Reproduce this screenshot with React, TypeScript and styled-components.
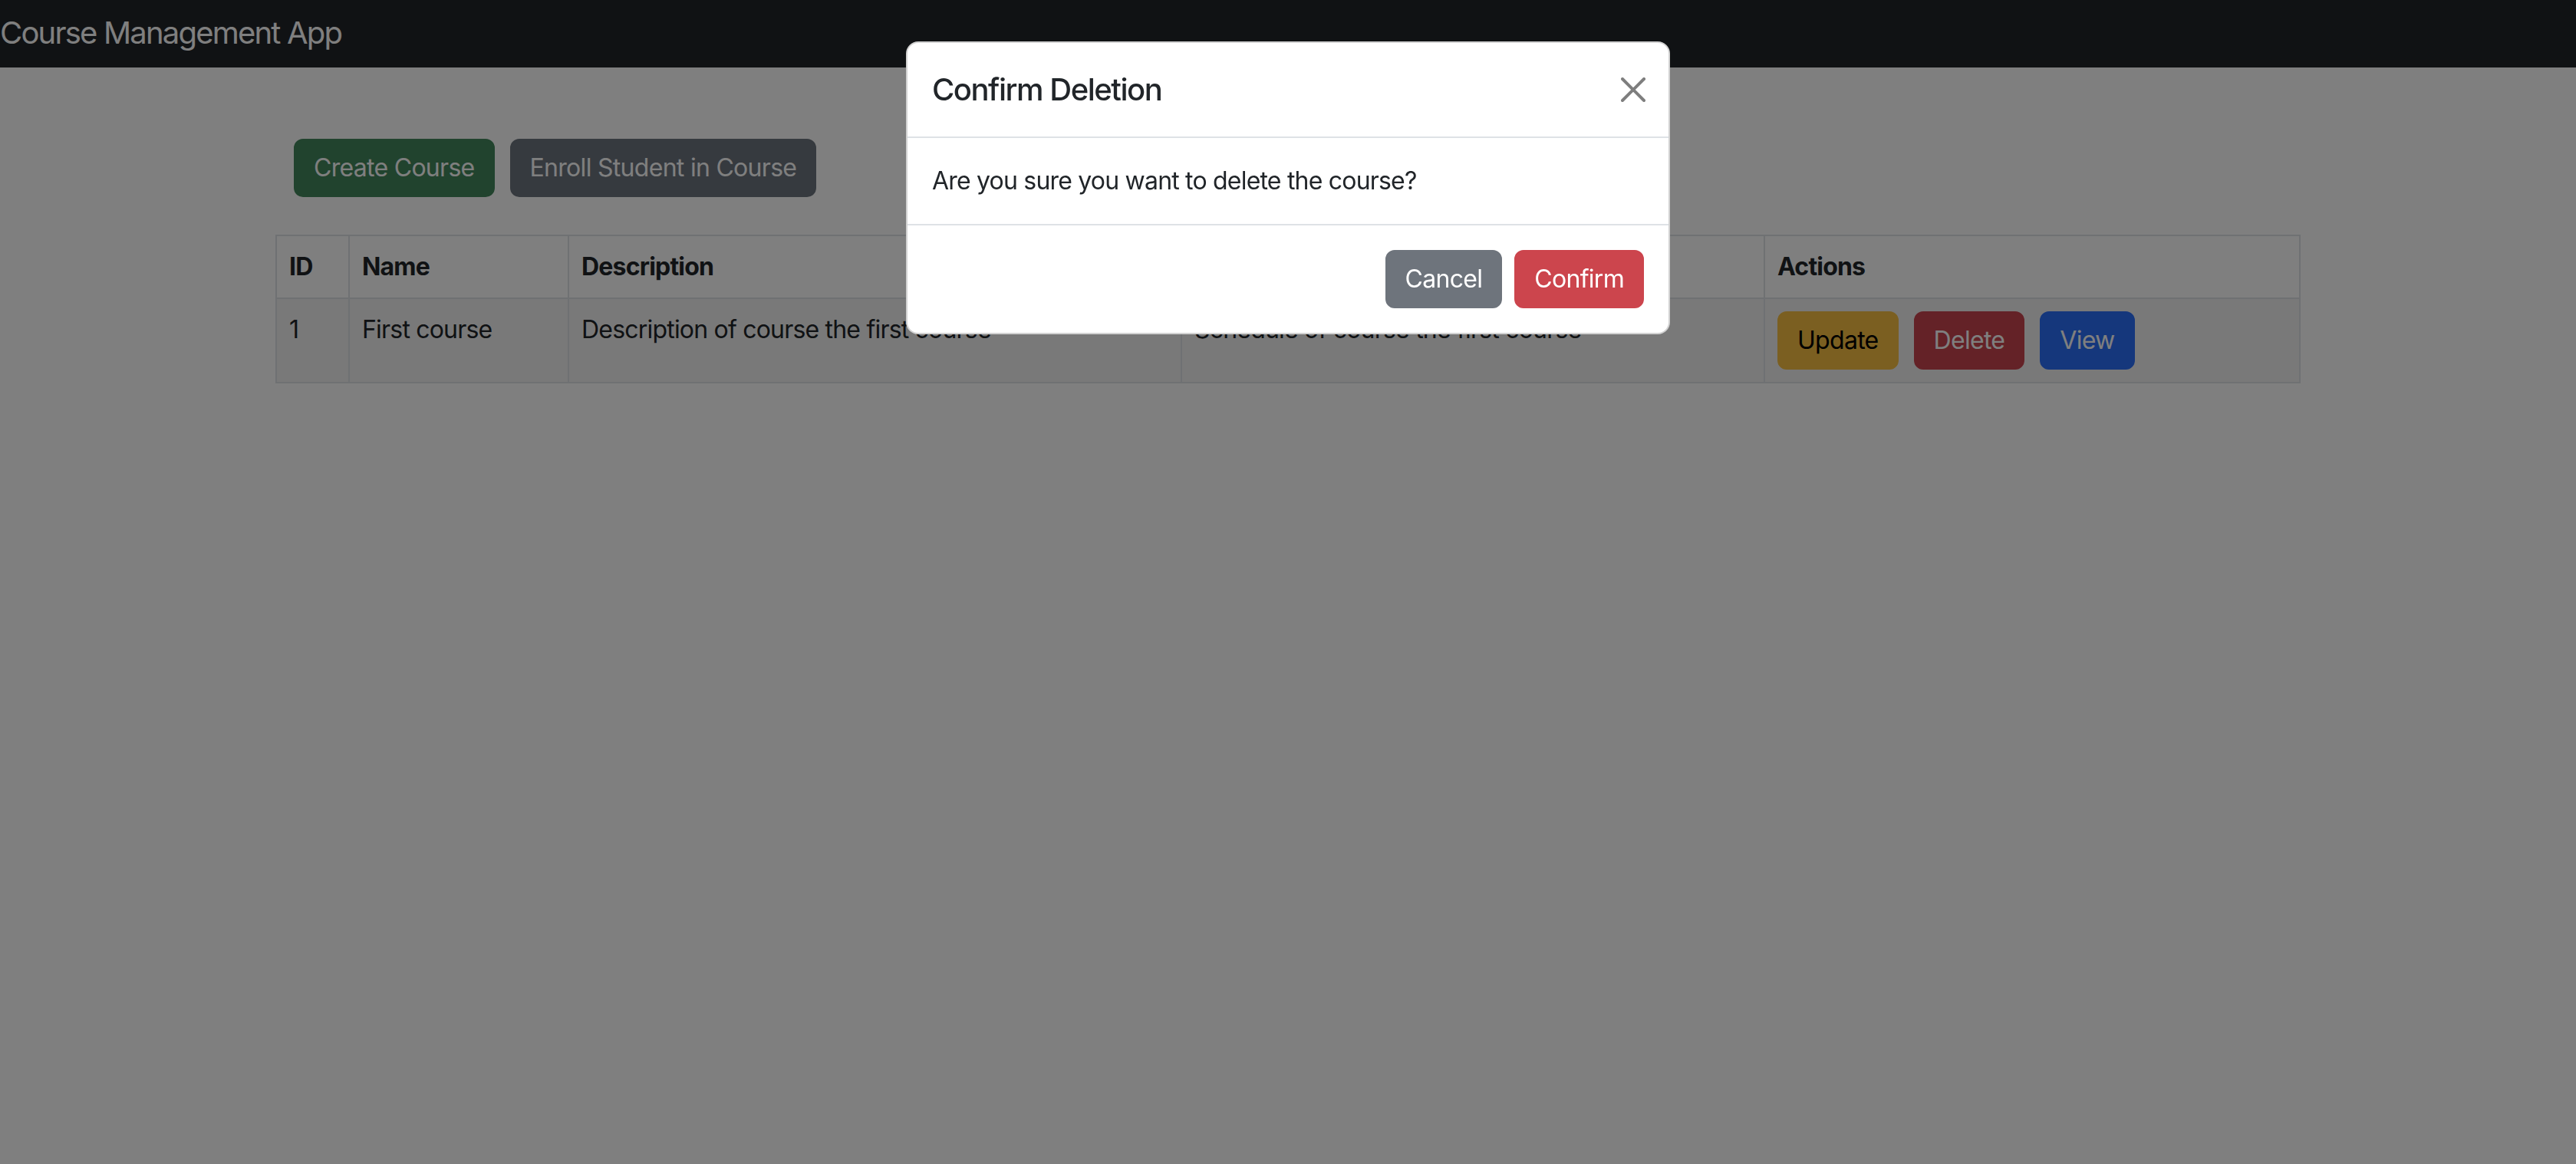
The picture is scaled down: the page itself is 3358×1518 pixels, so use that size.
import React from "react";
import styled, { createGlobalStyle } from "styled-components";

const GlobalStyle = createGlobalStyle`
  html, body {
    margin: 0;
    padding: 0;
    background: #ffffff;
  }
  body {
    font-family: Inter, "Noto Sans", "Liberation Sans", sans-serif;
    font-size: 32px;
    line-height: 48px;
    letter-spacing: -0.025em;
    color: #212529;
  }
  * { box-sizing: border-box; }
`;

const Page = styled.div`
  min-height: 1518px;
  background: #ffffff;
`;

const Navbar = styled.nav`
  height: 88px;
  background: #212529;
  display: flex;
  align-items: center;
  padding-bottom: 3px;
`;

const Brand = styled.span`
  font-size: 40px;
  line-height: 60px;
  color: #ffffff;
  font-weight: 400;
  letter-spacing: -0.045em;
`;

const Container = styled.main`
  max-width: 2640px;
  margin: 0 auto;
  padding: 0 24px;
`;

const Toolbar = styled.div`
  display: flex;
  gap: 20px;
  margin-top: 93px;
`;

const Button = styled.button<{ $bg: string; $fg?: string }>`
  height: 76px;
  padding: 12px 24px;
  border: 2px solid ${(p) => p.$bg};
  border-radius: 12px;
  background: ${(p) => p.$bg};
  color: ${(p) => p.$fg ?? "#ffffff"};
  font-family: inherit;
  font-size: 32px;
  line-height: 48px;
  font-weight: 400;
  letter-spacing: -0.022em;
  white-space: nowrap;
  cursor: pointer;
`;

const TableWrap = styled.div`
  margin: 49px -24px 0;
`;

const Table = styled.table`
  width: 100%;
  border-collapse: collapse;
  table-layout: fixed;
  border: 2px solid #dee2e6;
`;

const Col = styled.col<{ $w: number }>`
  width: ${(p) => p.$w}px;
`;

const HeadCell = styled.th`
  padding: 16px;
  border: 2px solid #dee2e6;
  text-align: left;
  font-weight: 700;
  vertical-align: bottom;
  color: #212529;
`;

const BodyRow = styled.tr`
  background: #f2f2f2;
`;

const Cell = styled.td`
  padding: 16px;
  border: 2px solid #dee2e6;
  vertical-align: top;
  color: #212529;
  white-space: nowrap;
`;

const ActionGroup = styled.div`
  display: flex;
  gap: 20px;
`;

const Backdrop = styled.div`
  position: fixed;
  inset: 0;
  background: rgba(0, 0, 0, 0.5);
  display: flex;
  justify-content: center;
  align-items: flex-start;
  padding-top: 54px;
`;

const Modal = styled.div`
  width: 996px;
  background: #ffffff;
  border: 2px solid rgba(0, 0, 0, 0.175);
  border-radius: 16px;
  display: flex;
  flex-direction: column;
`;

const ModalHeader = styled.div`
  display: flex;
  align-items: center;
  justify-content: space-between;
  padding: 31px 32px 31px 32px;
  border-bottom: 2px solid #dee2e6;
`;

const ModalTitle = styled.h5`
  margin: 0;
  font-size: 40px;
  line-height: 60px;
  font-weight: 500;
  letter-spacing: -0.037em;
  color: #212529;
`;

const CloseButton = styled.button`
  width: 32px;
  height: 32px;
  padding: 0;
  margin-right: -2px;
  border: 0;
  background: transparent;
  opacity: 0.5;
  display: flex;
  align-items: center;
  justify-content: center;
  cursor: pointer;
`;

const ModalBody = styled.div`
  padding: 32px;
  color: #212529;
`;

const ModalFooter = styled.div`
  display: flex;
  justify-content: flex-end;
  gap: 16px;
  padding: 32px;
  border-top: 2px solid #dee2e6;
`;

const columns = [
  { label: "ID", w: 95 },
  { label: "Name", w: 286 },
  { label: "Description", w: 799 },
  { label: "Schedule", w: 760 },
  { label: "Actions", w: 698 },
];

const CloseIcon = () => (
  <svg width="32" height="32" viewBox="0 0 16 16" aria-hidden="true">
    <path
      fill="#000"
      d="M.293.293a1 1 0 0 1 1.414 0L8 6.586 14.293.293a1 1 0 1 1 1.414 1.414L9.414 8l6.293 6.293a1 1 0 0 1-1.414 1.414L8 9.414l-6.293 6.293a1 1 0 0 1-1.414-1.414L6.586 8 .293 1.707a1 1 0 0 1 0-1.414z"
    />
  </svg>
);

export default function App() {
  return (
    <>
      <GlobalStyle />
      <Page>
        <Navbar>
          <Brand>Course Management App</Brand>
        </Navbar>
        <Container>
          <Toolbar>
            <Button $bg="#43875c">Create Course</Button>
            <Button $bg="#6c747e">Enroll Student in Course</Button>
          </Toolbar>
          <TableWrap>
            <Table>
              <colgroup>
                {columns.map((c) => (
                  <Col key={c.label} $w={c.w} />
                ))}
              </colgroup>
              <thead>
                <tr>
                  {columns.map((c) => (
                    <HeadCell key={c.label}>{c.label}</HeadCell>
                  ))}
                </tr>
              </thead>
              <tbody>
                <BodyRow>
                  <Cell>1</Cell>
                  <Cell>First course</Cell>
                  <Cell>Description of course the first course</Cell>
                  <Cell>Schedule of course the first course</Cell>
                  <Cell>
                    <ActionGroup>
                      <Button $bg="#f6be42" $fg="#000000">Update</Button>
                      <Button $bg="#c8444e">Delete</Button>
                      <Button $bg="#2a6ef8">View</Button>
                    </ActionGroup>
                  </Cell>
                </BodyRow>
              </tbody>
            </Table>
          </TableWrap>
        </Container>
        <Backdrop>
          <Modal role="dialog" aria-modal="true">
            <ModalHeader>
              <ModalTitle>Confirm Deletion</ModalTitle>
              <CloseButton aria-label="Close">
                <CloseIcon />
              </CloseButton>
            </ModalHeader>
            <ModalBody>Are you sure you want to delete the course?</ModalBody>
            <ModalFooter>
              <Button $bg="#6e747c">Cancel</Button>
              <Button $bg="#cc454d">Confirm</Button>
            </ModalFooter>
          </Modal>
        </Backdrop>
      </Page>
    </>
  );
}
